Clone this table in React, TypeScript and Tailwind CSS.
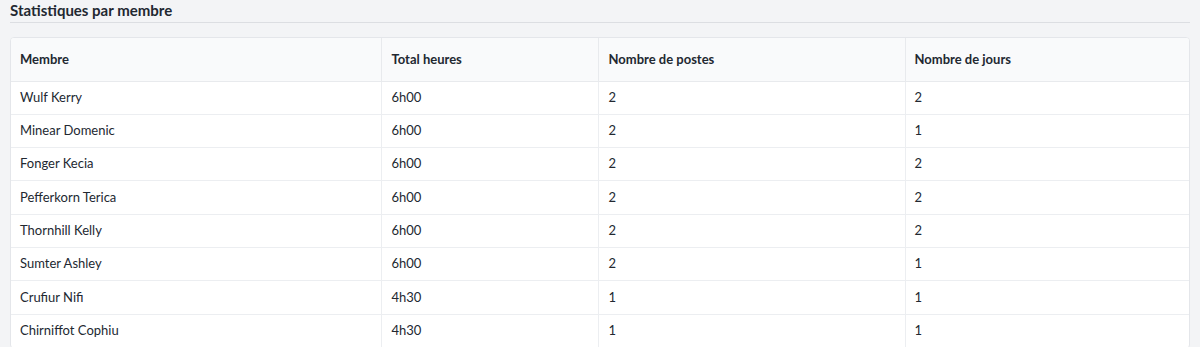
const rows = [
	{ name: "Wulf Kerry", hours: "6h00", posts: 2, days: 2 },
	{ name: "Minear Domenic", hours: "6h00", posts: 2, days: 1 },
	{ name: "Fonger Kecia", hours: "6h00", posts: 2, days: 2 },
	{ name: "Pefferkorn Terica", hours: "6h00", posts: 2, days: 2 },
	{ name: "Thornhill Kelly", hours: "6h00", posts: 2, days: 2 },
	{ name: "Sumter Ashley", hours: "6h00", posts: 2, days: 1 },
	{ name: "Crufiur Nifi", hours: "4h30", posts: 1, days: 1 },
	{ name: "Chirniffot Cophiu", hours: "4h30", posts: 1, days: 1 },
];

const App = () => {
	return (
		<div className="min-h-[347px] bg-[#f3f4f6] px-[10px] font-['Lato','Liberation_Sans',sans-serif] text-[#222831]">
			<h2 className="border-b border-[#dcdee2] pt-[1px] pb-[3px] text-[15px] font-bold leading-[18px]">
				Statistiques par membre
			</h2>
			<div className="mt-[14px] overflow-hidden rounded-[4px] border border-[#e4e6ea] bg-white">
				<table className="w-full table-fixed border-collapse text-left text-[13px]">
					<colgroup>
						<col className="w-[370px]" />
						<col className="w-[217px]" />
						<col className="w-[307px]" />
						<col />
					</colgroup>
					<thead className="bg-[#f9fafb]">
						<tr className="h-[43px] border-b border-[#e8eaed]">
							<th className="px-[9px] font-bold">Membre</th>
							<th className="border-l border-[#e8eaed] px-[10px] font-bold">Total heures</th>
							<th className="border-l border-[#e8eaed] px-[10px] font-bold">Nombre de postes</th>
							<th className="border-l border-[#e8eaed] px-[9px] font-bold">Nombre de jours</th>
						</tr>
					</thead>
					<tbody>
						{rows.map((r) => (
							<tr key={r.name} className="h-[33.3px] border-b border-[#eceef1]">
								<td className="px-[9px]">{r.name}</td>
								<td className="border-l border-[#eceef1] px-[10px]">{r.hours}</td>
								<td className="border-l border-[#eceef1] px-[10px]">{r.posts}</td>
								<td className="border-l border-[#eceef1] px-[9px]">{r.days}</td>
							</tr>
						))}
					</tbody>
				</table>
			</div>
		</div>
	);
};

export default App;
